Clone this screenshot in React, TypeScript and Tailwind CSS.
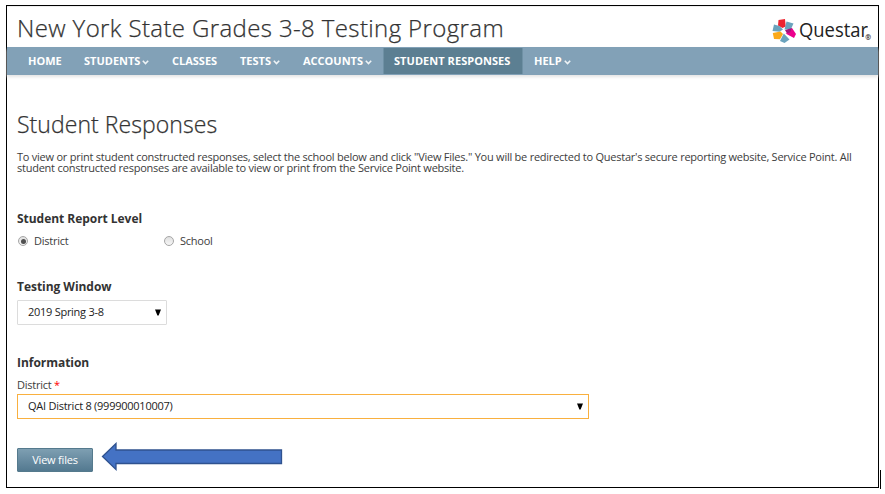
import type { ReactNode } from 'react'

type NavItem = {
  label: string
  width: string
  menu?: boolean
  active?: boolean
}

const navItems: NavItem[] = [
  { label: 'HOME', width: 'w-[56px]' },
  { label: 'STUDENTS', width: 'w-[88px]', menu: true },
  { label: 'CLASSES', width: 'w-[68px]' },
  { label: 'TESTS', width: 'w-[63px]', menu: true },
  { label: 'ACCOUNTS', width: 'w-[91px]', menu: true },
  { label: 'STUDENT RESPONSES', width: 'w-[140px]', active: true },
  { label: 'HELP', width: 'w-[60px]', menu: true },
]

function Chevron() {
  return (
    <svg className="mt-[2px] ml-[2px]" width="7" height="5" viewBox="0 0 7 5" fill="none">
      <path d="M0.8 0.8 L3.5 3.5 L6.2 0.8" stroke="#eef3f6" strokeWidth="1.6" />
    </svg>
  )
}

function Logo() {
  return (
    <div className="mt-[11px] flex h-[26px] items-start">
      <svg width="24" height="26" viewBox="0 0 24 26">
        <path d="M6.5 2 L13 1 L13.7 8.5 L10.5 10 L6 7.5 Z" fill="#ee2430" />
        <path d="M14.5 3.5 L21.5 5.5 L19 11 L12.5 11.5 Z" fill="#6ba3bd" />
        <path d="M2 6.5 L7.5 8 L11 11.5 L7.5 13.7 L0.5 13 Z" fill="#6ba3bd" />
        <path d="M13 12 L20 10 L19.5 16.5 L15 15.5 Z" fill="#a3157a" />
        <path d="M20 10 L24 16 L22 20 L13.5 15.5 L18 14.5 Z" fill="#ec008c" />
        <path d="M0.8 15 L8.5 13.5 L11 16 L8 21.3 L2 21 Z" fill="#fba919" />
        <path d="M11.8 15.5 L17.5 21.5 L12.5 25 L8 23 Z" fill="#6ba3bd" />
      </svg>
      <span className="mt-[-1px] ml-[3px] w-[66px] origin-left scale-x-[0.92] whitespace-nowrap text-[20px] leading-[25px] text-[#222]">
        Questar
      </span>
      <span className="mt-[16px] text-[7px] leading-[8px] font-bold text-[#222]">®</span>
    </div>
  )
}

function Radio({ checked }: { checked?: boolean }) {
  return (
    <span className="flex size-[10px] items-center justify-center rounded-full border border-[#a6a6a6] bg-linear-to-b from-[#e0e0e0] to-[#f6f6f6]">
      {checked && <span className="size-[5px] rounded-full bg-[#505050]" />}
    </span>
  )
}

function SectionTitle({ children }: { children: ReactNode }) {
  return (
    <h2 className="whitespace-nowrap text-[12px] leading-[16px] font-bold tracking-[-0.04px] text-[#333]">{children}</h2>
  )
}

function DownArrow() {
  return (
    <svg width="6" height="7" viewBox="0 0 6 7">
      <path d="M0 0.5 H6 L3.6 6.5 H2.4 Z" fill="#000" />
    </svg>
  )
}

export default function App() {
  return (
    <div className="relative h-[494px] w-[885px] overflow-hidden bg-white pt-[5px] pl-[6px] font-['Open_Sans','Noto_Sans',sans-serif] text-[11px] text-[#3c3c3c]">
      <div className="h-[483px] w-[873px] border border-black">
        {/* Header */}
        <header className="flex h-[41px] justify-between border-t border-[#eee] pr-[7px] pl-[10px]">
          <h1 className="mt-[5px] whitespace-nowrap text-[24px] leading-[32px] font-light tracking-[0.38px] text-[#333] [-webkit-text-stroke:0.25px_#333]">
            New York State Grades 3-8 Testing Program
          </h1>
          <Logo />
        </header>

        {/* Navigation */}
        <nav className="flex h-[28px] bg-[#82a1b7] pt-px pb-px pl-[10px] shadow-[0_2px_3px_#e4e4e4]">
          {navItems.map((item) => (
            <a
              key={item.label}
              className={`flex shrink-0 items-center whitespace-nowrap text-[11px] font-bold text-white ${item.width} ${item.active ? 'border-x border-[#6f91a5] bg-[#5c7f92] pl-[10px] tracking-[0.05px]' : 'pl-[11px]'}`}
            >
              {item.label}
              {item.menu && <Chevron />}
            </a>
          ))}
        </nav>

        {/* Content */}
        <main className="pl-[10px]">
          <h2 className="mt-[33px] whitespace-nowrap text-[23px] leading-[32px] font-light tracking-[0.06px] text-[#333] [-webkit-text-stroke:0.25px_#333]">
            Student Responses
          </h2>
          <p className="mt-[11px] h-[22px] whitespace-nowrap text-[11px] leading-[11px] tracking-[-0.24px]">
            To view or print student constructed responses, select the school below and click "View Files." You will be
            redirected to Questar's secure reporting website, Service Point. All
            <br />
            student constructed responses are available to view or print from the Service Point website.
          </p>

          <div className="mt-[38px]">
            <SectionTitle>Student Report Level</SectionTitle>
            <div className="mt-[6px] flex h-[16px] items-center tracking-[-0.25px]">
              <label className="flex w-[146px] items-center gap-[6px] pl-px">
                <Radio checked />
                District
              </label>
              <label className="flex items-center gap-[6px] pl-px">
                <Radio />
                School
              </label>
            </div>
          </div>

          <div className="mt-[30px]">
            <SectionTitle>Testing Window</SectionTitle>
            <div className="mt-[5px] flex h-[25px] w-[150px] items-center justify-between rounded-[1px] border border-[#dcdcdc] pr-[5px] pl-[10px] tracking-[-0.27px] text-[#222]">
              <span>2019 Spring 3-8</span>
              <DownArrow />
            </div>
          </div>

          <div className="mt-[30px]">
            <SectionTitle>Information</SectionTitle>
            <div className="mt-[6px] h-[15px] leading-[15px] tracking-[-0.25px]">
              District <span className="text-[#f00]">*</span>
            </div>
            <div className="mt-[2px] flex h-[25px] w-[572px] items-center justify-between border border-[#f9b03f] pr-[5px] pl-[10px] tracking-[-0.25px] text-[#222]">
              <span>QAI District 8 (999900010007)</span>
              <DownArrow />
            </div>
          </div>

          <div className="mt-[29px] flex">
            <button className="h-[24px] w-[76px] rounded-[1px] border border-[#557a8d] bg-linear-to-b from-[#7e9fb2] to-[#537990] text-[11px] tracking-[-0.2px] text-white">
              View files
            </button>
            <svg className="mt-[-6px] ml-[8px]" width="182" height="29" viewBox="0 0 182 29">
              <path d="M1.5 14.5 L15 1.5 V8 H180.5 V21.5 H15 V27.5 Z" fill="#4472c4" stroke="#2f528f" strokeWidth="1.3" />
            </svg>
          </div>
        </main>
      </div>
      <div className="absolute top-[470px] left-[880px] h-[19px] w-px bg-black" />
    </div>
  )
}
